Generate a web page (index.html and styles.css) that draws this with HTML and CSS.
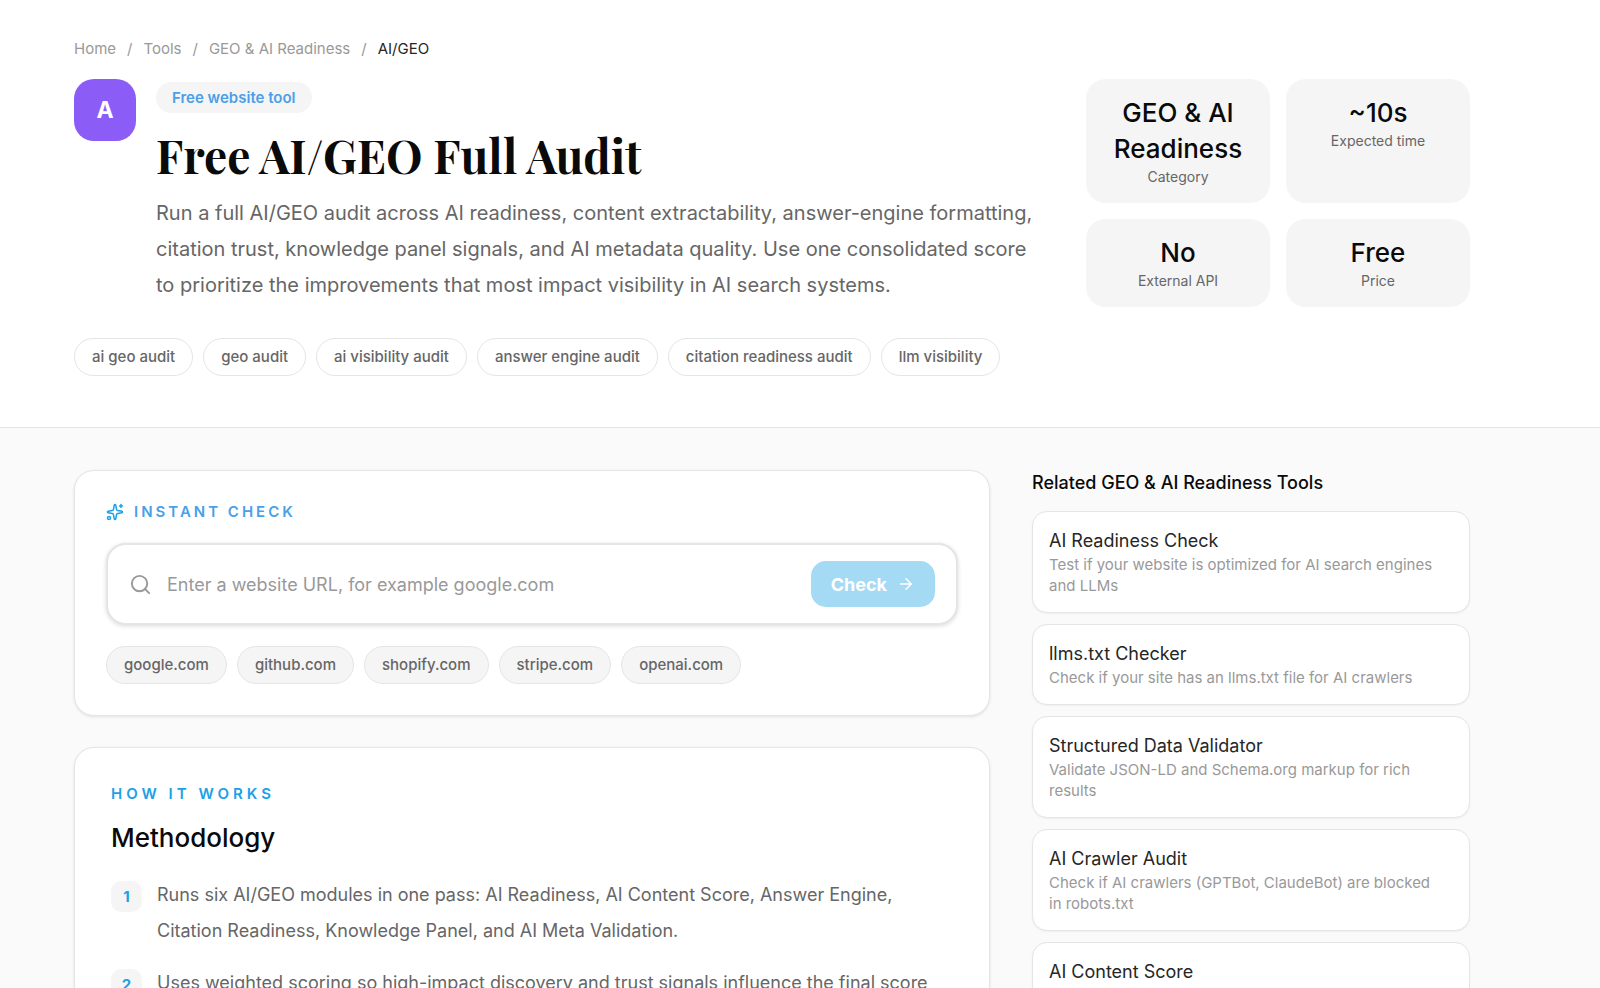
FILE: index.html
```html
<!DOCTYPE html>
<html lang="en">
<head>
    <meta charset="UTF-8">
    <meta name="viewport" content="width=device-width, initial-scale=1.0">
    <title>Free AI/GEO Full Audit</title>
    <link rel="stylesheet" href="styles.css">
</head>
<body>
    <header class="hero">
        <nav class="breadcrumb" aria-label="Breadcrumb">
            <a href="#">Home</a>
            <span>/</span>
            <a href="#">Tools</a>
            <span>/</span>
            <a href="#">GEO &amp; AI Readiness</a>
            <span>/</span>
            <span class="current">AI/GEO</span>
        </nav>
        <div class="hero-row">
            <div class="logo">A</div>
            <div class="intro">
                <span class="badge">Free website tool</span>
                <h1>Free AI/GEO Full Audit</h1>
                <p>Run a full AI/GEO audit across AI readiness, content extractability, answer-engine formatting, citation trust, knowledge panel signals, and AI metadata quality. Use one consolidated score to prioritize the improvements that most impact visibility in AI search systems.</p>
            </div>
            <div class="stats">
                <div class="stat">
                    <div class="stat-value">GEO &amp; AI Readiness</div>
                    <div class="stat-label">Category</div>
                </div>
                <div class="stat">
                    <div class="stat-value">~10s</div>
                    <div class="stat-label">Expected time</div>
                </div>
                <div class="stat">
                    <div class="stat-value">No</div>
                    <div class="stat-label">External API</div>
                </div>
                <div class="stat">
                    <div class="stat-value">Free</div>
                    <div class="stat-label">Price</div>
                </div>
            </div>
        </div>
        <div class="pills tags">
            <span class="pill">ai geo audit</span>
            <span class="pill">geo audit</span>
            <span class="pill">ai visibility audit</span>
            <span class="pill">answer engine audit</span>
            <span class="pill">citation readiness audit</span>
            <span class="pill">llm visibility</span>
        </div>
    </header>

    <div class="layout">
        <main class="content">
            <section class="card check">
                <div class="eyebrow">
                    <svg class="sparkles" viewBox="0 0 24 24" fill="none" stroke="currentColor" stroke-width="2" stroke-linecap="round" stroke-linejoin="round">
                        <path d="M11.017 2.814a1 1 0 0 1 1.966 0l1.051 5.558a2 2 0 0 0 1.594 1.594l5.558 1.051a1 1 0 0 1 0 1.966l-5.558 1.051a2 2 0 0 0-1.594 1.594l-1.051 5.558a1 1 0 0 1-1.966 0l-1.051-5.558a2 2 0 0 0-1.594-1.594l-5.558-1.051a1 1 0 0 1 0-1.966l5.558-1.051a2 2 0 0 0 1.594-1.594z"/>
                        <path d="M20 2v4"/>
                        <path d="M22 4h-4"/>
                        <circle cx="4" cy="20" r="2"/>
                    </svg>
                    <span>Instant check</span>
                </div>
                <form class="search">
                    <svg class="search-icon" viewBox="0 0 24 24" fill="none" stroke="currentColor" stroke-width="2" stroke-linecap="round" stroke-linejoin="round">
                        <circle cx="11" cy="11" r="8"/>
                        <path d="m21 21-4.3-4.3"/>
                    </svg>
                    <input type="text" aria-label="Website URL" placeholder="Enter a website URL, for example google.com">
                    <button type="submit" class="submit" disabled>
                        Check
                        <svg viewBox="0 0 24 24" fill="none" stroke="currentColor" stroke-width="2" stroke-linecap="round" stroke-linejoin="round">
                            <path d="M5 12h14"/>
                            <path d="m12 5 7 7-7 7"/>
                        </svg>
                    </button>
                </form>
                <div class="pills">
                    <button type="button" class="pill filled">google.com</button>
                    <button type="button" class="pill filled">github.com</button>
                    <button type="button" class="pill filled">shopify.com</button>
                    <button type="button" class="pill filled">stripe.com</button>
                    <button type="button" class="pill filled">openai.com</button>
                </div>
            </section>

            <section class="card method">
                <div class="eyebrow wide">How it works</div>
                <h2>Methodology</h2>
                <ol class="steps">
                    <li>
                        <span class="step-number">1</span>
                        <p>Runs six AI/GEO modules in one pass: AI Readiness, AI Content Score, Answer Engine, Citation Readiness, Knowledge Panel, and AI Meta Validation.</p>
                    </li>
                    <li>
                        <span class="step-number">2</span>
                        <p>Uses weighted scoring so high-impact discovery and trust signals influence the final score</p>
                    </li>
                </ol>
            </section>
        </main>

        <aside class="sidebar">
            <h3>Related GEO &amp; AI Readiness Tools</h3>
            <a class="tool" href="#">
                <span class="tool-name">AI Readiness Check</span>
                <span class="tool-text">Test if your website is optimized for AI search engines and LLMs</span>
            </a>
            <a class="tool" href="#">
                <span class="tool-name">llms.txt Checker</span>
                <span class="tool-text">Check if your site has an llms.txt file for AI crawlers</span>
            </a>
            <a class="tool" href="#">
                <span class="tool-name">Structured Data Validator</span>
                <span class="tool-text">Validate JSON-LD and Schema.org markup for rich results</span>
            </a>
            <a class="tool" href="#">
                <span class="tool-name">AI Crawler Audit</span>
                <span class="tool-text">Check if AI crawlers (GPTBot, ClaudeBot) are blocked in robots.txt</span>
            </a>
            <a class="tool" href="#">
                <span class="tool-name">AI Content Score</span>
            </a>
        </aside>
    </div>
</body>
</html>
```
FILE: styles.css
```css
:root {
    --bg: #fafafa;
    --white: #fff;
    --soft: #f5f5f5;
    --border: #e5e5e5;
    --text: #0a0a0a;
    --dark: #262626;
    --mid: #666;
    --muted: #999;
    --blue: #1ba1e8;
    --blue-soft: #4a9fe8;
    --purple: #8b5cf6;
}

* {
    box-sizing: border-box;
}

body {
    margin: 0;
    background-color: var(--bg);
    color: var(--text);
    font-family: Inter, "Liberation Sans", sans-serif;
    font-size: 18px;
}

h1, h2, h3, p, ol {
    margin: 0;
    padding: 0;
}

a {
    color: inherit;
    text-decoration: none;
}

.hero {
    padding: 38px 130px 51px 74px;
    background-color: var(--white);
    border-bottom: 1px solid var(--border);
}

.breadcrumb {
    display: flex;
    gap: 11px;
    margin-bottom: 19px;
    font-size: 15px;
    line-height: 22px;
    color: var(--muted);
}

.breadcrumb .current {
    color: var(--dark);
}

.hero-row {
    display: flex;
    align-items: flex-start;
}

.logo {
    display: flex;
    flex: none;
    align-items: center;
    justify-content: center;
    width: 62px;
    height: 62px;
    margin-right: 20px;
    border-radius: 20px;
    background-color: var(--purple);
    color: var(--white);
    font-size: 23px;
    font-weight: 700;
}

.intro {
    flex: 1;
    padding-top: 3px;
}

.badge {
    display: block;
    width: fit-content;
    padding: 0 16px;
    border-radius: 16px;
    background-color: var(--soft);
    color: var(--blue-soft);
    font-size: 15px;
    font-weight: 600;
    line-height: 31px;
}

h1 {
    margin: 13px 0 11px;
    font-family: "Playfair Display", "Liberation Serif", serif;
    font-size: 46px;
    font-weight: 700;
    line-height: 58px;
}

.intro p {
    max-width: 885px;
    color: var(--mid);
    font-size: 20px;
    line-height: 36px;
}

.stats {
    display: grid;
    flex: none;
    grid-template-columns: 1fr 1fr;
    gap: 16px;
    width: 384px;
    margin-left: 24px;
}

.stat {
    padding: 16px;
    border-radius: 20px;
    background-color: var(--soft);
    text-align: center;
}

.stat-value {
    font-size: 26px;
    font-weight: 500;
    line-height: 36px;
}

.stat-label {
    color: var(--mid);
    font-size: 14px;
    line-height: 20px;
}

.pills {
    display: flex;
    flex-wrap: wrap;
    gap: 10px;
}

.tags {
    margin-top: 31px;
}

.pill {
    padding: 0 17px;
    border: 1px solid var(--border);
    border-radius: 19px;
    background-color: var(--white);
    color: var(--mid);
    font-family: inherit;
    font-size: 15px;
    font-weight: 500;
    line-height: 36px;
}

.pill.filled {
    background-color: var(--soft);
    cursor: pointer;
}

.layout {
    display: grid;
    grid-template-columns: 1fr 438px;
    gap: 42px;
    padding: 42px 130px 42px 74px;
}

.content {
    display: flex;
    flex-direction: column;
    gap: 31px;
}

.card {
    border: 1px solid var(--border);
    border-radius: 20px;
    background-color: var(--white);
    box-shadow: 0 1px 3px rgba(0, 0, 0, 0.1);
}

.check {
    padding: 31px;
}

.eyebrow {
    display: flex;
    align-items: center;
    gap: 10px;
    color: var(--blue-soft);
    font-size: 15px;
    font-weight: 600;
    letter-spacing: 3px;
    line-height: 20px;
    text-transform: uppercase;
}

.eyebrow.wide {
    color: var(--blue);
    letter-spacing: 4px;
}

.sparkles {
    width: 18px;
    height: 18px;
    color: var(--blue);
}

.search {
    display: flex;
    align-items: center;
    gap: 15px;
    margin: 21px 0;
    padding: 16px 21px;
    border: 2px solid var(--border);
    border-radius: 20px;
    background-color: var(--white);
    box-shadow: 0 1px 4px rgba(0, 0, 0, 0.15);
}

.search-icon {
    flex: none;
    width: 23px;
    height: 23px;
    color: var(--muted);
}

.search input {
    flex: 1;
    min-width: 0;
    padding: 0;
    border: none;
    outline: none;
    background: none;
    color: var(--text);
    font-family: inherit;
    font-size: 18px;
}

.search input::placeholder {
    color: var(--muted);
}

.submit {
    display: flex;
    align-items: center;
    gap: 10px;
    height: 46px;
    padding: 0 20px;
    border: none;
    border-radius: 15px;
    background-color: #a4daf4;
    color: var(--white);
    font-family: inherit;
    font-size: 18px;
    font-weight: 700;
}

.submit svg {
    width: 18px;
    height: 18px;
}

.method {
    padding: 36px;
}

h2 {
    margin: 16px 0 21px;
    font-size: 26px;
    font-weight: 500;
    line-height: 36px;
}

.steps {
    display: flex;
    flex-direction: column;
    gap: 16px;
    list-style: none;
}

.steps li {
    display: flex;
    align-items: flex-start;
    gap: 15px;
    color: var(--mid);
    line-height: 36px;
}

.step-number {
    flex: none;
    width: 31px;
    margin-top: 4px;
    border-radius: 10px;
    background-color: var(--soft);
    color: var(--blue);
    font-size: 15px;
    font-weight: 700;
    line-height: 31px;
    text-align: center;
}

.sidebar {
    display: flex;
    flex-direction: column;
    gap: 11px;
}

h3 {
    margin-bottom: 4px;
    font-size: 18px;
    font-weight: 500;
    line-height: 26px;
}

.tool {
    display: flex;
    flex-direction: column;
    padding: 16px;
    border: 1px solid var(--border);
    border-radius: 15px;
    background-color: var(--white);
    box-shadow: 0 1px 2px rgba(0, 0, 0, 0.05);
}

.tool-name {
    color: var(--dark);
    line-height: 26px;
}

.tool-text {
    max-width: 390px;
    color: var(--muted);
    font-size: 15px;
    line-height: 21px;
}
```
